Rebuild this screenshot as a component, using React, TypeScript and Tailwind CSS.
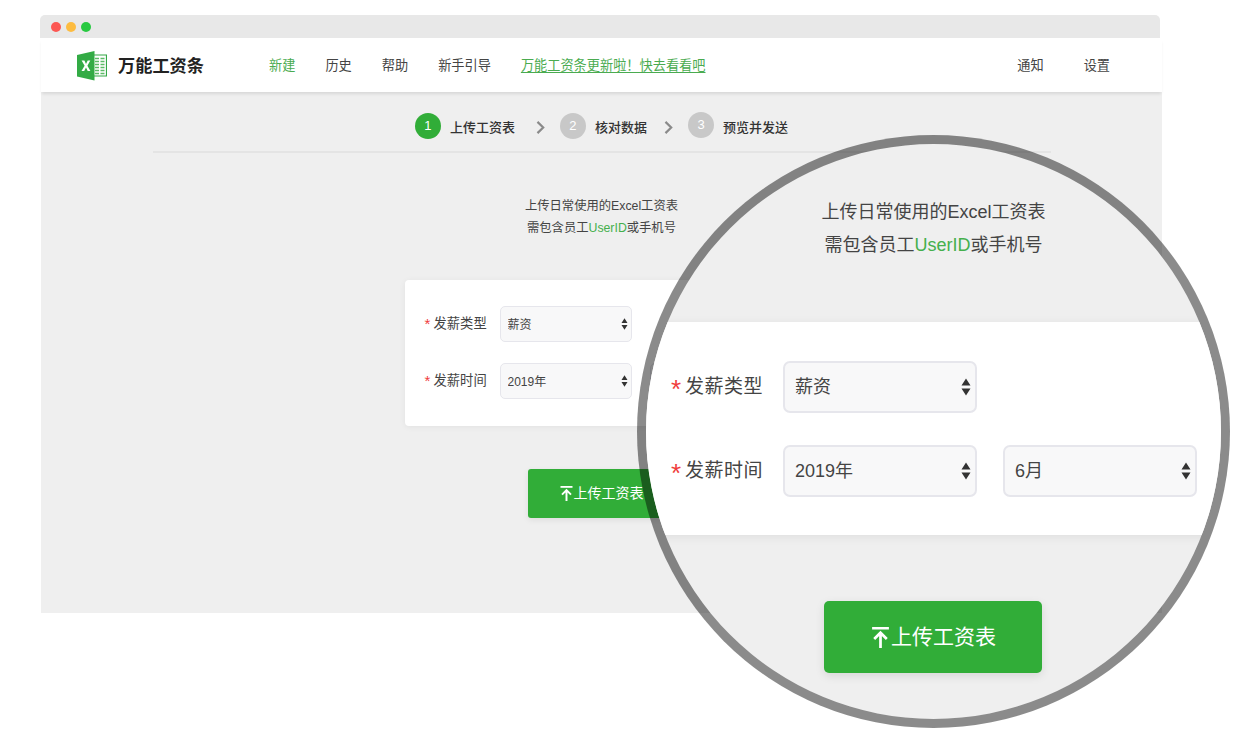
import React from "react";

function Arrows({ className }: { className: string }) {
  return (
    <svg viewBox="0 0 10 18" className={className} aria-hidden="true">
      <path d="M5 0.5 L9.5 7.5 H0.5 Z M5 17.5 L0.5 10.5 H9.5 Z" fill="#333" />
    </svg>
  );
}

function UploadIcon({ className }: { className: string }) {
  return (
    <svg viewBox="0 0 16 20" className={className} aria-hidden="true">
      <path d="M0 1.2 H16" stroke="#fff" strokeWidth="2.4" fill="none" />
      <path d="M8 20 V6 M2 11.5 L8 5.5 L14 11.5" stroke="#fff" strokeWidth="2.6" fill="none" />
    </svg>
  );
}

function Chevron({ className }: { className: string }) {
  return (
    <svg viewBox="0 0 8 12" className={className} aria-hidden="true">
      <path d="M1.2 0.8 L6.5 6 L1.2 11.2" stroke="#8a8a8a" strokeWidth="2" fill="none" />
    </svg>
  );
}

function ExcelLogo() {
  return (
    <svg viewBox="0 0 30 30" className="w-[30px] h-[30px] shrink-0" aria-hidden="true">
      <path d="M16 4 H29.5 V25 H16 Z" fill="#fff" stroke="#34a846" strokeWidth="1.2" />
      <path
        d="M18 7.5 H22 M23.5 7.5 H27.5 M18 10.5 H22 M23.5 10.5 H27.5 M18 13.5 H22 M23.5 13.5 H27.5 M18 16.5 H22 M23.5 16.5 H27.5 M18 19.5 H22 M23.5 19.5 H27.5 M18 22.5 H22 M23.5 22.5 H27.5"
        stroke="#5cba66"
        strokeWidth="1.6"
        fill="none"
      />
      <path d="M0 4 L17.5 0 V29.5 L0 25.5 Z" fill="#33ab45" />
      <path d="M4.6 9.5 H7.4 L9 13 L10.7 9.5 H13.3 L10.4 14.7 L13.4 20 H10.7 L9 16.4 L7.2 20 H4.5 L7.6 14.7 Z" fill="#fff" />
    </svg>
  );
}

function Sel({
  value,
  box,
  arrows,
}: {
  value: string;
  box: string;
  arrows: string;
}) {
  return (
    <div className="relative shrink-0">
      <select
        defaultValue={value}
        className={`block appearance-none bg-[#f8f8f9] border-[#e6e6ec] text-[#444] outline-none ${box}`}
      >
        <option>{value}</option>
      </select>
      <Arrows className={`absolute top-1/2 -translate-y-1/2 ${arrows}`} />
    </div>
  );
}

export default function App() {
  const smallBox = "w-[132px] h-[36px] pl-[7px] pt-[1px] text-[12px] border rounded-[5px]";
  const smallArrows = "right-[3px] w-[9px] h-[15px] scale-[0.8]";
  const bigBox = "w-[194px] h-[52px] pl-[10px] text-[18px] border-2 rounded-[7px]";
  const bigArrows = "right-[6px] w-[10px] h-[18px]";

  return (
    <div className="relative w-[1240px] h-[748px] overflow-hidden bg-white pt-[15px] pl-[40px] font-['Liberation_Sans','Noto_Sans_CJK_SC',sans-serif]">
      <div className="w-[1120px] h-[23px] bg-[#e8e8e8] rounded-t-[5px] flex items-center gap-[5px] pl-[11px]">
        <span className="w-[10px] h-[10px] rounded-full bg-[#fc5753]" />
        <span className="w-[10px] h-[10px] rounded-full bg-[#fdbc40]" />
        <span className="w-[10px] h-[10px] rounded-full bg-[#28c941]" />
      </div>

      <header className="relative z-10 ml-[1px] w-[1121px] h-[54px] bg-white flex items-center pt-[2px] pl-[36px] pr-[52px] text-[13.2px] text-[#444] shadow-[0_3px_3px_-1px_rgba(0,0,0,0.1)]">
        <ExcelLogo />
        <span className="ml-[11px] w-[151px] text-[17.2px] font-bold text-[#222] translate-y-[1px]">万能工资条</span>
        <nav className="flex items-center gap-[30px]">
          <span className="text-[#4aab50]">新建</span>
          <span>历史</span>
          <span>帮助</span>
          <span>新手引导</span>
          <span className="text-[#4aab50] underline underline-offset-2">万能工资条更新啦！快去看看吧</span>
        </nav>
        <div className="ml-auto flex items-center gap-[40px]">
          <span>通知</span>
          <span>设置</span>
        </div>
      </header>

      <main className="ml-[1px] w-[1121px] h-[521px] bg-[#efefef] flex flex-col items-center pt-[21px]">
        <div className="flex items-center h-[26px] text-[13px] font-medium text-[#333]">
          <span className="w-[26px] h-[26px] rounded-full bg-[#31ad38] text-white text-[13px] flex items-center justify-center">1</span>
          <span className="ml-[9px] translate-y-[2px]">上传工资表</span>
          <Chevron className="ml-[21px] w-[9px] h-[13px] translate-y-[1px]" />
          <span className="ml-[15px] w-[26px] h-[26px] rounded-full bg-[#c8c8c8] text-white text-[13px] flex items-center justify-center">2</span>
          <span className="ml-[9px] translate-y-[2px]">核对数据</span>
          <Chevron className="ml-[17px] w-[9px] h-[13px] translate-y-[1px]" />
          <span className="ml-[15px] w-[26px] h-[26px] rounded-full bg-[#c8c8c8] text-white text-[13px] flex items-center justify-center -translate-y-[1px]">3</span>
          <span className="ml-[9px] translate-y-[2px]">预览并发送</span>
        </div>
        <div className="mt-[12px] w-[898px] h-[2px] bg-[#e4e4e4]" />

        <div className="mt-[42px] text-center text-[12.3px] leading-[22px] text-[#444]">
          <p>上传日常使用的Excel工资表</p>
          <p>
            需包含员工<span className="text-[#45b04c]">UserID</span>或手机号
          </p>
        </div>

        <section className="mt-[41px] w-[394px] h-[146px] bg-white rounded-[4px] shadow-[0_1px_6px_rgba(0,0,0,0.06)] pt-[26px] pl-[20px] flex flex-col gap-[21px]">
          <div className="flex items-center text-[13.3px] text-[#444]">
            <span className="w-[9px] text-[15px] leading-none text-[#f03c3c] -translate-y-[1px]">*</span>
            <span className="w-[66px]">发薪类型</span>
            <Sel value="薪资" box={smallBox} arrows={smallArrows} />
          </div>
          <div className="flex items-center text-[13.3px] text-[#444]">
            <span className="w-[9px] text-[15px] leading-none text-[#f03c3c] -translate-y-[1px]">*</span>
            <span className="w-[66px]">发薪时间</span>
            <Sel value="2019年" box={smallBox} arrows={smallArrows} />
            <div className="ml-[18px]">
              <Sel value="6月" box={smallBox} arrows={smallArrows} />
            </div>
          </div>
        </section>

        <button className="mt-[43px] w-[148px] h-[49px] bg-[#31ad38] rounded-[3px] text-white text-[14px] flex items-center justify-center shadow-[0_2px_6px_rgba(0,0,0,0.08)]">
          <UploadIcon className="w-[13px] h-[15px]" />
          <span className="ml-[1px]">上传工资表</span>
        </button>
      </main>

      {/* magnifying glass lying over the page */}
      <div className="absolute z-20 left-[637px] top-[135px] w-[593px] h-[593px] rounded-full border-[9px] border-[#00000074] bg-[#efefef] bg-clip-padding overflow-hidden flex flex-col items-center pt-[52px]">
        <div className="text-center text-[18px] leading-[33px] text-[#444] whitespace-nowrap">
          <p>上传日常使用的Excel工资表</p>
          <p>
            需包含员工<span className="text-[#45b04c]">UserID</span>或手机号
          </p>
        </div>

        <section className="mt-[60px] w-full shrink-0 h-[213px] bg-white shadow-[0_2px_10px_rgba(0,0,0,0.07)] pt-[39px] pl-[25px] flex flex-col gap-[32px]">
          <div className="flex items-center text-[19px] text-[#444] whitespace-nowrap">
            <span className="w-[14px] text-[#f03c3c] text-[26px] leading-none translate-y-[2px]">*</span>
            <span className="w-[98px] tracking-[0.5px]">发薪类型</span>
            <Sel value="薪资" box={bigBox} arrows={bigArrows} />
          </div>
          <div className="flex items-center text-[19px] text-[#444] whitespace-nowrap">
            <span className="w-[14px] text-[#f03c3c] text-[26px] leading-none translate-y-[2px]">*</span>
            <span className="w-[98px] tracking-[0.5px]">发薪时间</span>
            <Sel value="2019年" box={bigBox} arrows={bigArrows} />
            <div className="ml-[26px]">
              <Sel value="6月" box={bigBox} arrows={bigArrows} />
            </div>
          </div>
        </section>

        <button className="mt-[66px] shrink-0 self-start ml-[178px] w-[218px] h-[72px] bg-[#31ad38] rounded-[5px] text-white text-[21px] flex items-center justify-center pl-[2px] shadow-[0_3px_10px_rgba(0,0,0,0.1)]">
          <UploadIcon className="w-[17px] h-[21px]" />
          <span className="ml-[2px]">上传工资表</span>
        </button>
      </div>
    </div>
  );
}
